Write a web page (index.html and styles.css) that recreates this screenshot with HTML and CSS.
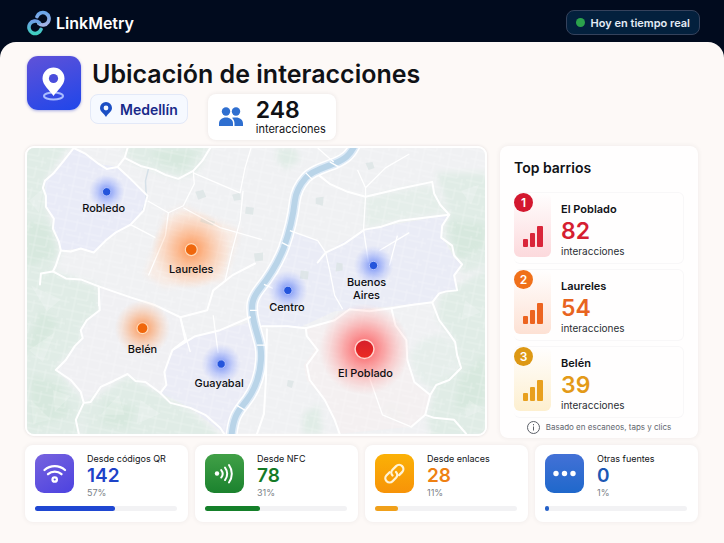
FILE: index.html
```html
<!DOCTYPE html>
<html lang="es">
<head>
    <meta charset="UTF-8">
    <meta name="viewport" content="width=device-width, initial-scale=1.0">
    <title>LinkMetry</title>
    <link rel="stylesheet" href="styles.css">
</head>
<body>
    <header class="topbar">
        <div class="brand">
            <svg width="24" height="26" viewBox="0 0 24 26" fill="none" stroke-width="3.600" stroke-linecap="round">
                <defs>
                    <linearGradient id="logoTop" x1="0" y1="0" x2="0" y2="1">
                        <stop offset="0" stop-color="#6aa6ea"/>
                        <stop offset="1" stop-color="#a5b4e6"/>
                    </linearGradient>
                    <linearGradient id="logoBottom" x1="0" y1="0" x2="0" y2="1">
                        <stop offset="0" stop-color="#6f9fe6"/>
                        <stop offset="1" stop-color="#3fcfc0"/>
                    </linearGradient>
                </defs>
                <path d="M10 6.600A6.200 6.200 0 1 1 11.800 13.450" stroke="url(#logoTop)"/>
                <path d="M14 19.400A6.200 6.200 0 1 1 12.200 12.550" stroke="url(#logoBottom)"/>
            </svg>
            <span>LinkMetry</span>
        </div>
        <div class="live"><span class="live-dot"></span>Hoy en tiempo real</div>
    </header>

    <main class="page">
        <section class="heading">
            <div class="heading-icon">
                <svg width="54" height="54" viewBox="0 0 54 54">
                    <ellipse cx="26.500" cy="40" rx="9.500" ry="3.500" fill="none" stroke="#a9bcff" stroke-width="2"/>
                    <path d="M26.500 40C22.500 34 15.500 29 15.500 22.500a11 11 0 0 1 22 0C37.500 29 30.500 34 26.500 40z" fill="#fff"/>
                    <circle cx="26.500" cy="22.500" r="4.600" fill="#4a4ddb"/>
                </svg>
            </div>
            <div class="heading-text">
                <h1>Ubicación de interacciones</h1>
                <div class="chips">
                    <button class="city" type="button">
                        <svg width="12" height="15" viewBox="0 0 12 15">
                            <path fill-rule="evenodd" d="M6 15C4 11.500 0 9.500 0 6a6 6 0 0 1 12 0C12 9.500 8 11.500 6 15zM6 3.600a2.400 2.400 0 1 0 0 4.800a2.400 2.400 0 0 0 0-4.800z" fill="#1c4fc4"/>
                        </svg>
                        Medellín
                    </button>
                    <div class="total">
                        <svg width="26" height="20" viewBox="0 0 26 20" fill="#2f6fd0">
                            <circle cx="8" cy="4.500" r="4.200"/>
                            <circle cx="18" cy="4.500" r="4.200"/>
                            <path d="M1 19v-2.500C1 13 4 10.500 8 10.500s7 2.500 7 6V19z"/>
                            <path d="M14 10.800c1-.2 2.500-.3 4-.3 4 0 7 2.500 7 6V19h-8.500v-2.500c0-2.200-1-4.400-2.500-5.700z"/>
                        </svg>
                        <div>
                            <strong>248</strong>
                            <span>interacciones</span>
                        </div>
                    </div>
                </div>
            </div>
        </section>

        <section class="content">
            <div class="map">
                <svg viewBox="26 147 460 287" preserveAspectRatio="xMidYMid slice">
                    <defs>
                        <radialGradient id="heatBlue">
                            <stop offset="0" stop-color="#3a62f5" stop-opacity=".7"/>
                            <stop offset=".45" stop-color="#5a7bfa" stop-opacity=".38"/>
                            <stop offset="1" stop-color="#8ba0ff" stop-opacity="0"/>
                        </radialGradient>
                        <radialGradient id="heatOrange">
                            <stop offset="0" stop-color="#ff7620" stop-opacity=".75"/>
                            <stop offset=".45" stop-color="#ff8c42" stop-opacity=".42"/>
                            <stop offset="1" stop-color="#ffb180" stop-opacity="0"/>
                        </radialGradient>
                        <radialGradient id="heatRed">
                            <stop offset="0" stop-color="#fa2a30" stop-opacity=".8"/>
                            <stop offset=".45" stop-color="#ff5a5a" stop-opacity=".48"/>
                            <stop offset="1" stop-color="#ff9a96" stop-opacity="0"/>
                        </radialGradient>
                        <linearGradient id="dotRed" x1="0" y1="0" x2="0" y2="1">
                            <stop offset="0" stop-color="#d51f2b"/>
                            <stop offset="1" stop-color="#ec2a22"/>
                        </linearGradient>
                        <pattern id="streets" width="26" height="22" patternUnits="userSpaceOnUse" patternTransform="rotate(12)">
                            <path d="M0 3h26M0 12h17M8 17h18M5 0v22M17 0v12M22 12v10" fill="none" stroke="#fff" stroke-width=".7"/>
                        </pattern>
                        <filter id="soft" x="-10%" y="-10%" width="120%" height="120%">
                            <feGaussianBlur stdDeviation="3"/>
                        </filter>
                    </defs>

                    <rect x="26" y="147" width="460" height="287" fill="#f0f1f3"/>

                    <!-- hills and parks -->
                    <g fill="#e0ece6" filter="url(#soft)">
                        <path d="M20 140h52L44 180l1 26 15 44-8 20 46 16 1 24-19 20 2 10-27 28 28 32-5 40H20z"/>
                        <path d="M128 143h82l-14 28-18 6-38-12-16-10z"/>
                        <path d="M83 406l44-30 33 18 30 16 34 30H82z"/>
                        <path d="M437 172h55v92l-30 10 0-14-18-25 6-22z"/>
                        <path d="M366 197l66-13 16 28-50 8-32 7z" opacity=".7"/>
                        <path d="M440 296l52-30v174h-60l-4-22 8-34 24-16-4-26-18-24z"/>
                        <path d="M410 355l12-15 20-6 14 12 2 18-26 26-15-12z" opacity=".6"/>
                        <path d="M303 415l16-10 4 29h-20zM277 147h18l5 12-14 9-9-9z"/>
                        <path d="M382 410l12-8 12 16-12 4z"/>
                    </g>
                    <g fill="#d7e8de" filter="url(#soft)">
                        <path d="M26 220l22 5 5 30-27 12zM40 310l18 12-20 30-14-4zM30 375l30 10 10 30-40 12z"/>
                        <path d="M450 220l36 4v22l-28 14zM460 380l26-26v50l-30 6z"/>
                        <path d="M150 150h46l-12 18-24-6zM105 400l30 8-8 20-26-4z"/>
                    </g>
                    <g fill="#fff" opacity=".2">
                        <path d="M28 200l14-12-4 24zM30 285l30 14-14 12zM28 350l26-18-12 30zM52 390l18 6-16 16zM30 400l20 20-18 4zM100 415l18-20 6 20zM140 400l20 14-24 10zM462 190l18-6-8 20zM466 300l16 12-20 8zM470 400l14 10-18 8z"/>
                    </g>

                    <!-- districts -->
                    <g fill="#e8eaf7" fill-opacity=".9">
                        <path d="M73 147L62 161 53 172 44 180 45 206 53 218 52 228 60 250 80 248 93 252 105 240 130 224 143 210 147 195 130 178 117 166 98 163 85 153z"/>
                        <path d="M290 230l28 10 8 12 39-23 85-15-7 11v12l12 20 8 7-8 11 3 15-18 3-7 9-63 6-35 3-37 17-44-2-8-20z" fill-opacity=".75"/>
                        <path d="M172 350l23-14 25-6 35-9 6 39-5 25-22 30-2 19h-8l-34-26-30-15 6-8-2-13z" fill-opacity=".7"/>
                        <path d="M98 286l82 31 5 23-13 10-8 22 2 13-6 8-33-19-27 13-17 16-3-11-25-22 27-32-2-8 6-10 13-10z" fill="#f0eff3"/>
                        <path d="M306 328l29-8 15-11 42-1 4 17 11 15 1 20 7 22 16 13-5 20-14 12-72 7-15-34-18-20-3-15 11-15z" fill="#f4eff1"/>
                    </g>
                    <path d="M166 214l17-8 56 24-7 24-8 26-60 6-19-12z" fill="#fbe9df" opacity=".7" filter="url(#soft)"/>

                    <rect x="26" y="147" width="460" height="287" fill="url(#streets)" opacity=".4"/>
                    <g fill="#d8e2e3" opacity=".7">
                        <path d="M195 191l8-2 3 7-8 3zM232 194l8-2 1 7-7 1zM246 206l8 1-1 7-8-1zM201 217l14 4-2 4-13-4zM316 197l8-1-1 9-7-2zM301 270l8 1-1 8-8-1zM337 262l6 1v7l-7 1zM254 253l9-1v8l-8 1zM288 380l6 1-2 7-5-2zM366 162l7-1 2 6-6 2z"/>
                    </g>

                    <!-- river -->
                    <g fill="none" stroke-linejoin="round">
                        <path d="M356 143C350 155 345 158 336 162S313 169 306 177 296 192 295 200C293 218 290 230 284 247 277 265 268 278 260 288S250 305 254 322 262 345 261 360 256 388 247 400 233 415 231 440" stroke="#fff" stroke-width="12"/>
                        <path d="M356 143C350 155 345 158 336 162S313 169 306 177 296 192 295 200C293 218 290 230 284 247 277 265 268 278 260 288S250 305 254 322 262 345 261 360 256 388 247 400 233 415 231 440" stroke="#dfebf7" stroke-width="9"/>
                        <path d="M356 143C350 155 345 158 336 162S313 169 306 177 296 192 295 200C293 218 290 230 284 247 277 265 268 278 260 288S250 305 254 322 262 345 261 360 256 388 247 400 233 415 231 440" stroke="#b9d4e8" stroke-width="6"/>
                        <path d="M148 168l-3 12 1 20-4 10" stroke="#d5e0e8" stroke-width="1.500"/>
                    </g>

                    <!-- main roads -->
                    <g fill="none" stroke="#fff" stroke-width="2" stroke-linejoin="round" stroke-linecap="round">
                        <path d="M73 147L62 161 53 172 44 180 42 187 45 195 45 206 53 218 52 228 58 241 60 250 70 251 80 248 93 252 105 240 115 232 130 224 143 210 147 195 138 186 130 178 117 166 106 168 98 163 85 153z"/>
                        <path d="M127 147l-3 10-7 9M124 157l16 8 15 4 10 5 13 4 15-8 9-10 8-13"/>
                        <path d="M60 250l-5 15-3 6-12 2-1 11M52 271l13 7 15 1 18 7 32 11 25 8 25 12 27-7 6-20 19-15 23-12"/>
                        <path d="M98 286l1 24-13 10-6 10 2 8-8 8-9 14-10 10 15 10 10 12 3 11-8 17 3 14M83 403l7-1 10-15 13-6 14-7 8 7 10 1 15 11 10 10 20 5 15 7 15 13 4 6"/>
                        <path d="M160 393l6-8-2-13 8-22 13-10-5-23M172 350l23-14 25-6 30-13"/>
                        <path d="M320 175l10 8 18 8 18 5 34-8 33-7 2 12 6 11 9 10-50 6-18 6-17 3-20 14-19 9-8 10"/>
                        <path d="M450 214l-7 11-1 12 11 8 2 10 8 9-8 11 3 15-11 1-7 2-7 9-23 3-18 3-22 3-20-2-15 11-29 8-18-2-26 0"/>
                        <path d="M433 302l7 18 9 12 7 10 2 13 4 13-12 12-13 5-6 10-5 20-14 12M392 308l4 17 11 15 1 20 7 22 16 13"/>
                        <path d="M306 328l1 8 11 14-11 15 3 15 15 20 10 20 5 14M426 415l9 3 20 2 12 14M257 434l7-20 2-35 1-50"/>
                    </g>
                    <!-- secondary roads -->
                    <g fill="none" stroke="#fff" stroke-width="1.300" stroke-linejoin="round">
                        <path d="M193 170l1 13-11 22-15 7-21-12M193 172l47 20 5-25 6-20M183 207l37 20 42 12M243 190l-3 30-8 30-7 30M168 212l-3 23-17 40M130 224l25 13"/>
                        <path d="M366 187v9l-2 33 5 33M366 187l20-20 24-14M290 230l28 10 8 12 4 18 5 25 8 14M366 187l-8-18M318 147l16 14M369 375l14 40 29 12M213 315l5 38M180 317l10 35M98 286v20M398 235l-8 30M380 250l30-18"/>
                        <path d="M330 161l9 5M306 172l7 7M282 242l8 4M264 284l9 4M250 310h8M257 345h10M236 405l10 6"/>
                    </g>

                    <!-- heat spots -->
                    <circle cx="106" cy="191" r="18" fill="url(#heatBlue)"/>
                    <circle cx="288" cy="290" r="20" fill="url(#heatBlue)"/>
                    <circle cx="374" cy="265" r="20" fill="url(#heatBlue)"/>
                    <circle cx="221" cy="364" r="20" fill="url(#heatBlue)"/>
                    <circle cx="191" cy="249" r="40" fill="url(#heatOrange)"/>
                    <circle cx="142" cy="328" r="28" fill="url(#heatOrange)"/>
                    <circle cx="365" cy="349" r="46" fill="url(#heatRed)"/>

                    <g fill="#2455dc" stroke="#b3c3fb" stroke-width="1">
                        <circle cx="106" cy="191" r="4.200"/>
                        <circle cx="288" cy="290" r="4.200"/>
                        <circle cx="374" cy="265" r="4.200"/>
                        <circle cx="221" cy="364" r="4.200"/>
                    </g>
                    <g fill="#f0670c" stroke="#ffd9b8" stroke-width="1.200">
                        <circle cx="191" cy="249" r="6"/>
                        <circle cx="142" cy="328" r="5.500"/>
                    </g>
                    <circle cx="365" cy="349" r="9.500" fill="url(#dotRed)" stroke="#ffd3cd" stroke-width="1.500"/>

                    <g class="map-labels">
                        <text x="103" y="211">Robledo</text>
                        <text x="191" y="273">Laureles</text>
                        <text x="142" y="353">Belén</text>
                        <text x="219" y="387">Guayabal</text>
                        <text x="287" y="311">Centro</text>
                        <text x="367" y="286">Buenos</text>
                        <text x="367" y="299">Aires</text>
                        <text x="366" y="377">El Poblado</text>
                    </g>
                </svg>
            </div>

            <aside class="ranking">
                <h2>Top barrios</h2>
                <ol>
                    <li class="red">
                        <div class="thumb">
                            <span class="rank">1</span>
                            <svg width="22" height="22" viewBox="0 0 22 22"><rect x="1" y="13" width="5" height="8" rx="1"/><rect x="8" y="7" width="5" height="14" rx="1"/><rect x="15" y="0" width="6" height="21" rx="1"/></svg>
                        </div>
                        <div class="info">
                            <h3>El Poblado</h3>
                            <strong>82</strong>
                            <span>interacciones</span>
                        </div>
                    </li>
                    <li class="orange">
                        <div class="thumb">
                            <span class="rank">2</span>
                            <svg width="22" height="22" viewBox="0 0 22 22"><rect x="1" y="13" width="5" height="8" rx="1"/><rect x="8" y="7" width="5" height="14" rx="1"/><rect x="15" y="0" width="6" height="21" rx="1"/></svg>
                        </div>
                        <div class="info">
                            <h3>Laureles</h3>
                            <strong>54</strong>
                            <span>interacciones</span>
                        </div>
                    </li>
                    <li class="amber">
                        <div class="thumb">
                            <span class="rank">3</span>
                            <svg width="22" height="22" viewBox="0 0 22 22"><rect x="1" y="13" width="5" height="8" rx="1"/><rect x="8" y="7" width="5" height="14" rx="1"/><rect x="15" y="0" width="6" height="21" rx="1"/></svg>
                        </div>
                        <div class="info">
                            <h3>Belén</h3>
                            <strong>39</strong>
                            <span>interacciones</span>
                        </div>
                    </li>
                </ol>
                <p class="note">
                    <svg width="13" height="13" viewBox="0 0 13 13" fill="none" stroke="#5c6068"><circle cx="6.500" cy="6.500" r="6"/><path d="M6.500 5.500v4M6.500 3v1.300"/></svg>
                    Basado en escaneos, taps y clics
                </p>
            </aside>
        </section>

        <section class="sources">
            <article class="source qr">
                <div class="source-icon">
                    <svg width="39" height="39" viewBox="0 0 39 39" fill="none" stroke="#fff" stroke-width="2.300" stroke-linecap="round">
                        <path d="M9.500 16a15.500 15.500 0 0 1 20.500 0M13 20.200a10 10 0 0 1 13.500 0"/>
                        <circle cx="19.700" cy="25.500" r="2.200"/>
                    </svg>
                </div>
                <div class="source-text">
                    <h3>Desde códigos QR</h3>
                    <strong>142</strong>
                    <span>57%</span>
                </div>
                <div class="bar"><div style="width: 56%"></div></div>
            </article>
            <article class="source nfc">
                <div class="source-icon">
                    <svg width="39" height="39" viewBox="0 0 39 39" fill="none" stroke="#fff" stroke-width="2" stroke-linecap="round">
                        <circle cx="12" cy="19.500" r="2.200" fill="#fff" stroke="none"/>
                        <path d="M16.200 16a6 6 0 0 1 0 7.500M20 13.500a10 10 0 0 1 0 12.500M24 11a15 15 0 0 1 0 17.500"/>
                    </svg>
                </div>
                <div class="source-text">
                    <h3>Desde NFC</h3>
                    <strong>78</strong>
                    <span>31%</span>
                </div>
                <div class="bar"><div style="width: 39%"></div></div>
            </article>
            <article class="source link">
                <div class="source-icon">
                    <svg width="39" height="39" viewBox="0 0 39 39" fill="none" stroke="#fff3d6" stroke-width="2.300" stroke-linecap="round">
                        <path d="M17.500 21.500a4.200 4.200 0 0 1 0-5.800l3.600-3.600a4.200 4.200 0 0 1 6 6l-3 3"/>
                        <path d="M21 18a4.200 4.200 0 0 1 0 5.800l-3.400 3.400a4.200 4.200 0 0 1-6-6l3-3"/>
                    </svg>
                </div>
                <div class="source-text">
                    <h3>Desde enlaces</h3>
                    <strong>28</strong>
                    <span>11%</span>
                </div>
                <div class="bar"><div style="width: 16%"></div></div>
            </article>
            <article class="source other">
                <div class="source-icon">
                    <svg width="39" height="39" viewBox="0 0 39 39" fill="#fff">
                        <circle cx="11" cy="19.500" r="2.700"/>
                        <circle cx="19.500" cy="19.500" r="2.700"/>
                        <circle cx="28" cy="19.500" r="2.700"/>
                    </svg>
                </div>
                <div class="source-text">
                    <h3>Otras fuentes</h3>
                    <strong>0</strong>
                    <span>1%</span>
                </div>
                <div class="bar"><div style="width: 3%"></div></div>
            </article>
        </section>
    </main>
</body>
</html>
```

FILE: styles.css
```css
* {
    box-sizing: border-box;
}

body {
    margin: 0;
    min-height: 100vh;
    display: flex;
    flex-direction: column;
    font-family: Inter, "Liberation Sans", sans-serif;
    color: #101216;
    background-color: #010b1e;
}

h1,
h2,
h3,
p,
ol {
    margin: 0;
    padding: 0;
}

svg {
    display: block;
    flex-shrink: 0;
}

.topbar {
    display: flex;
    align-items: center;
    justify-content: space-between;
    height: 42px;
    padding: 3px 24px 0 27px;
}

.brand {
    display: flex;
    align-items: center;
    gap: 5px;
    font-size: 16px;
    font-weight: 600;
    color: #fff;
}

.live {
    display: flex;
    align-items: center;
    gap: 6px;
    height: 25px;
    padding: 0 9px;
    border: 1px solid #35425c;
    border-radius: 8px;
    background-color: #03203d;
    color: #e4ecf6;
    font-size: 11px;
    font-weight: 600;
}

.live-dot {
    width: 9px;
    height: 9px;
    border-radius: 50%;
    background-color: #2ba24c;
}

.page {
    flex: 1;
    padding: 14px 26px 20px 25px;
    border-radius: 16px 16px 0 0;
    background-color: #fdf9f7;
}

.heading {
    display: flex;
    gap: 11px;
    padding-left: 2px;
    height: 90px;
}

.heading-icon {
    width: 54px;
    height: 54px;
    border-radius: 11px;
    background: linear-gradient(160deg, #6052d8, #1f46ea);
    box-shadow: 0 1px 3px rgba(40, 60, 200, 0.4);
}

.heading-text h1 {
    font-size: 25px;
    line-height: 36px;
    font-weight: 600;
}

.chips {
    display: flex;
    align-items: flex-start;
    gap: 20px;
    margin-top: 2px;
    margin-left: -2px;
}

.city {
    display: flex;
    align-items: center;
    gap: 8px;
    height: 30px;
    padding: 0 9px;
    border: 1px solid #e3e9f8;
    border-radius: 8px;
    background-color: #f6f9ff;
    color: #182a8a;
    font-family: inherit;
    font-size: 14px;
    font-weight: 600;
}

.total {
    display: flex;
    align-items: center;
    gap: 12px;
    height: 46px;
    padding: 0 10px;
    border-radius: 8px;
    background-color: #fff;
    box-shadow: 0 0 4px rgba(60, 50, 60, 0.1);
}

.total strong,
.total span {
    display: block;
}

.total strong {
    font-size: 23px;
    line-height: 24px;
    font-weight: 600;
}

.total span {
    font-size: 11px;
    line-height: 14px;
}

.content {
    display: grid;
    grid-template-columns: 1fr 198px;
    gap: 13px;
    align-items: start;
}

.map {
    border: 2px solid #fff;
    border-radius: 9px;
    overflow: hidden;
    box-shadow: 0 0 3px rgba(60, 50, 60, 0.15);
}

.map svg {
    width: 100%;
    height: auto;
}

.map-labels {
    font-size: 11px;
    font-weight: 500;
    text-anchor: middle;
    fill: #0c0d10;
}

.ranking {
    padding: 12px 14px 2px;
    border-radius: 8px;
    background-color: #fffefe;
    box-shadow: 0 0 5px rgba(60, 50, 60, 0.08);
}

.ranking h2 {
    font-size: 14px;
    line-height: 20px;
    font-weight: 600;
}

.ranking ol {
    display: grid;
    gap: 5px;
    margin-top: 14px;
    list-style: none;
}

.ranking li {
    display: flex;
    gap: 10px;
    height: 72px;
    border: 1px solid #f8f7f8;
    border-left: 0;
    border-radius: 6px;
}

.thumb {
    display: flex;
    flex-direction: column;
    align-items: center;
    justify-content: space-between;
    width: 37px;
    height: 64px;
    padding-bottom: 9px;
    border-radius: 6px;
}

.rank {
    align-self: flex-start;
    width: 19px;
    height: 19px;
    border-radius: 50%;
    color: #fff;
    font-size: 12px;
    line-height: 19px;
    font-weight: 600;
    text-align: center;
}

.info {
    padding-top: 8px;
}

.info h3 {
    font-size: 11px;
    line-height: 16px;
    font-weight: 600;
}

.info strong {
    display: block;
    font-size: 23px;
    line-height: 28px;
    font-weight: 600;
}

.info span {
    display: block;
    font-size: 10px;
    line-height: 12px;
    color: #2b2e34;
}

.red .thumb { background: linear-gradient(transparent, #fcd9dc); }
.red .rank { background-color: #d3182f; }
.red strong { color: #d51e31; }
.red svg { fill: #d9263a; }

.orange .thumb { background: linear-gradient(transparent, #fde1d4); }
.orange .rank { background-color: #f0701a; }
.orange strong { color: #e8641f; }
.orange svg { fill: #ec6420; }

.amber .thumb { background: linear-gradient(transparent, #fdefcf); }
.amber .rank { background-color: #dd9814; }
.amber strong { color: #e39a18; }
.amber svg { fill: #e8a01e; }

.note {
    display: flex;
    align-items: center;
    justify-content: center;
    gap: 6px;
    height: 18px;
    color: #62666e;
    font-size: 8px;
}

.sources {
    display: grid;
    grid-template-columns: repeat(4, 1fr);
    gap: 7px;
    margin-top: 7px;
}

.source {
    display: grid;
    grid-template-columns: 39px 1fr;
    column-gap: 13px;
    padding: 9px 11px 11px 10px;
    border-radius: 8px;
    background-color: #fff;
    box-shadow: 0 0 5px rgba(60, 50, 60, 0.08);
}

.source-icon {
    height: 39px;
    border-radius: 9px;
}

.source-text h3 {
    font-size: 9px;
    line-height: 10px;
    font-weight: 400;
    white-space: nowrap;
}

.source-text strong {
    display: block;
    font-size: 19px;
    line-height: 24px;
    font-weight: 600;
}

.source-text span {
    display: block;
    font-size: 9px;
    line-height: 10px;
    color: #7b7f87;
}

.bar {
    grid-column: 1 / -1;
    height: 5px;
    margin-top: 8px;
    border-radius: 3px;
    background-color: #f2f2f4;
}

.bar div {
    height: 5px;
    border-radius: 3px;
}

.qr .source-icon { background: linear-gradient(150deg, #7763de, #4c42e0); }
.qr strong { color: #1d43c8; }
.qr .bar div { background-color: #1f47d2; }

.nfc .source-icon { background: linear-gradient(#41a047, #1b822e); }
.nfc strong { color: #157a26; }
.nfc .bar div { background-color: #15802a; }

.link .source-icon { background: linear-gradient(#fbb106, #f79308); }
.link strong { color: #ee8012; }
.link .bar div { background-color: #f0a01a; }

.other .source-icon { background: linear-gradient(#4371d6, #1f68cb); }
.other strong { color: #1d58b4; }
.other .bar div { background-color: #2460c8; }
```
